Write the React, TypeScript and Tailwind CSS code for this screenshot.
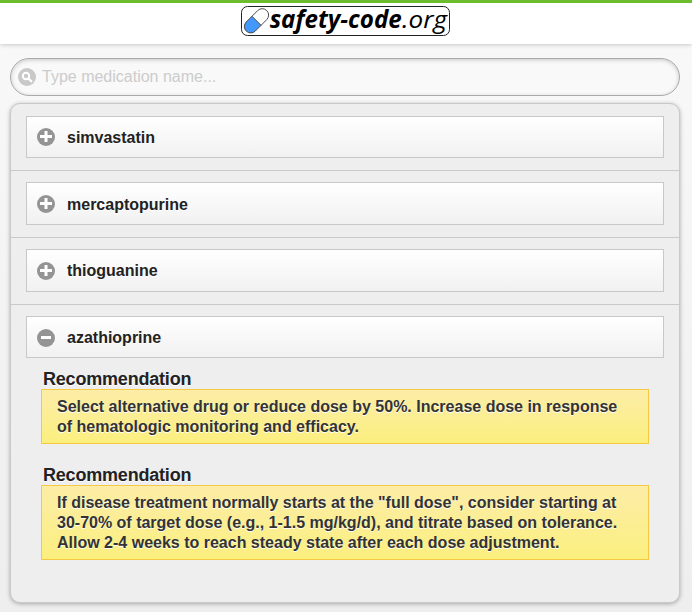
import type { ReactNode } from 'react';

function Logo() {
  return (
    <svg width="210" height="32" viewBox="240 5 210 32" className="overflow-visible" role="img" aria-label="safety-code.org">
      <rect x="241.5" y="6.5" width="208" height="29" rx="6" fill="#fff" stroke="#222" />
      <g transform="translate(256.5 20.8) rotate(-45)">
        <path d="M0-6.4H-8.1A6.4 6.4 0 0 0-8.1 6.4H0Z" fill="#4598fb" />
        <rect x="-14.5" y="-6.4" width="29" height="12.8" rx="6.4" fill="none" stroke="#444" strokeWidth="0.9" />
        <path d="M0-6.4V6.4" stroke="#444" strokeWidth="0.9" />
      </g>
      <g fontFamily='"Open Sans", "Noto Sans", sans-serif' fontStyle="italic" fill="#000">
        <text x="269.7" y="28" fontSize="24.5" fontWeight="700" textLength="132" lengthAdjust="spacingAndGlyphs">safety-code</text>
        <text x="402" y="28" fontSize="24.5" textLength="45" lengthAdjust="spacingAndGlyphs">.org</text>
      </g>
    </svg>
  );
}

function Toggle({ open }: { open?: boolean }) {
  return (
    <svg width="18" height="18" viewBox="0 0 18 18" className="shrink-0">
      <circle cx="9" cy="9" r="9" fill="#949494" />
      <path d={open ? 'M4 8.5H14' : 'M3 8.5H15M9 3V14'} stroke="#fff" strokeWidth="3" />
    </svg>
  );
}

function Drug({ name, open, className, labelClass = '' }: { name: string; open?: boolean; className: string; labelClass?: string }) {
  return (
    <div
      className={`mx-[15px] flex items-center gap-3 border border-[#c8c8c8] bg-linear-to-b from-white to-[#f1f1f1] pl-[10px] text-base font-bold text-[#222] [text-shadow:0_1px_0_#fff] ${className}`}
    >
      <Toggle open={open} />
      <span className={labelClass}>{name}</span>
    </div>
  );
}

function Recommendation({ children, className }: { children: ReactNode; className: string }) {
  return (
    <section className="mx-[30px]">
      <h3 className="h-[21px] pt-px pl-[2px] text-[18px] leading-[21px] font-bold tracking-[-0.2px] text-[#222] [text-shadow:0_1px_0_#fff]">
        Recommendation
      </h3>
      <div
        className={`border border-[#f7c942] bg-linear-to-b from-[#fceda7] to-[#fbef7e] pt-[7px] pl-[15px] text-base leading-5 font-bold whitespace-nowrap text-[#333] [text-shadow:0_1px_0_#fff] ${className}`}
      >
        {children}
      </div>
    </section>
  );
}

export default function App() {
  return (
    <div className="h-[612px] w-[692px] overflow-hidden bg-linear-to-b from-[#f9f9f9] to-[#eeeeee] font-['Liberation_Sans',Arial,sans-serif]">
      <header className="flex h-11 justify-center border-t-[3px] border-[#6bbd2e] bg-white pt-[2px] pr-[2px] shadow-[0_0_5px_rgba(0,0,0,0.28)]">
        <Logo />
      </header>
      <label className="mx-[10px] mt-[14px] flex h-[38px] w-[670px] items-center gap-[6px] rounded-full border border-[#aaa] bg-[#f9f9f9] pl-[7px] shadow-[inset_0_1px_4px_rgba(0,0,0,0.2)]">
        <svg width="18" height="18" viewBox="0 0 18 18">
          <circle cx="9" cy="9" r="9" fill="#c9c9c9" />
          <circle cx="8" cy="8" r="3.2" fill="none" stroke="#fff" strokeWidth="2" />
          <path d="M10.3 10.3L14 14" stroke="#fff" strokeWidth="2.3" />
        </svg>
        <input
          placeholder="Type medication name..."
          className="w-[600px] bg-transparent text-base text-[#333] outline-none placeholder:text-[#ccc]"
        />
      </label>
      <main className="mx-[10px] mt-[7px] h-[500px] w-[670px] rounded-[10px] border border-[#c9c9c9] bg-[#eee] shadow-[0_1px_4px_rgba(0,0,0,0.3)]">
        <div className="h-[67px] border-b border-[#c9c9c9] pt-3">
          <Drug name="simvastatin" className="h-[42px]" labelClass="pt-[2px]" />
        </div>
        <div className="h-[67px] border-b border-[#c9c9c9] pt-[11px]">
          <Drug name="mercaptopurine" className="h-[43px]" labelClass="pt-[2px]" />
        </div>
        <div className="h-[67px] border-b border-[#c9c9c9] pt-[11px]">
          <Drug name="thioguanine" className="h-[43px]" />
        </div>
        <div className="pt-[11px]">
          <Drug name="azathioprine" open className="h-[42px] pt-[2px]" />
          <div className="flex flex-col gap-5 pt-[10px]">
            <Recommendation className="h-[55px]">
              Select alternative drug or reduce dose by 50%. Increase dose in response
              <br />
              of hematologic monitoring and efficacy.
            </Recommendation>
            <Recommendation className="h-[75px]">
              If disease treatment normally starts at the "full dose", consider starting at
              <br />
              30-70% of target dose (e.g., 1-1.5 mg/kg/d), and titrate based on tolerance.
              <br />
              Allow 2-4 weeks to reach steady state after each dose adjustment.
            </Recommendation>
          </div>
        </div>
      </main>
    </div>
  );
}
